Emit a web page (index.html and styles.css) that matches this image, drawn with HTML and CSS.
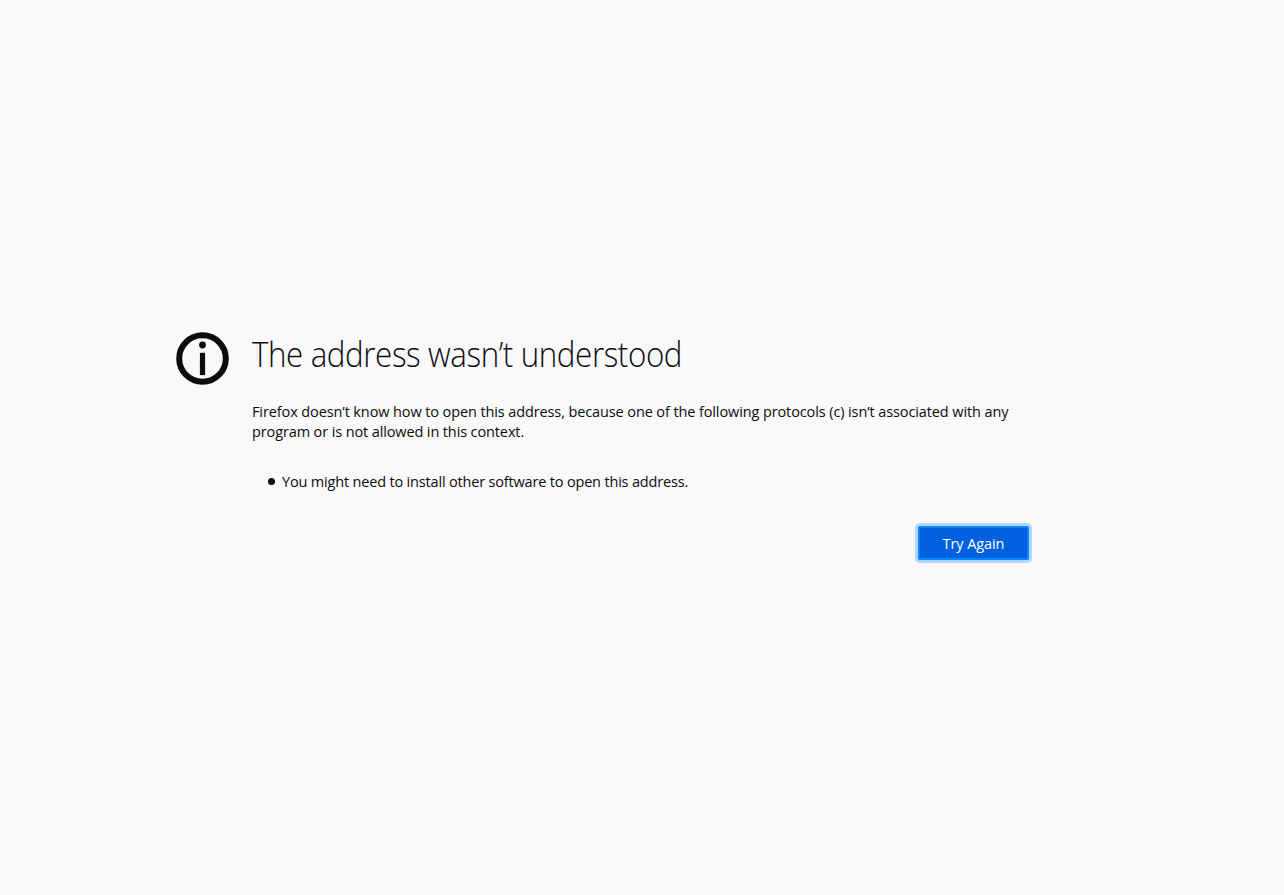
FILE: index.html
```html
<!DOCTYPE html>
<html lang="en">
<head>
<meta charset="utf-8">
<title>Problem loading page</title>
<link rel="stylesheet" href="styles.css">
</head>
<body>
<main class="container">
  <svg class="icon" viewBox="0 0 54 54" aria-hidden="true">
    <circle cx="27.5" cy="27.5" r="23.3" fill="none" stroke="#0c0c0d" stroke-width="6"/>
    <circle cx="27.5" cy="14" r="3.4" fill="#0c0c0d"/>
    <rect x="24.9" y="21.8" width="5.2" height="22.3" fill="#0c0c0d"/>
  </svg>
  <div class="content">
    <h1 class="title"><span class="title-text">The address wasn’t understood</span></h1>
    <p class="description"><span class="line-one">Firefox doesn’t know how to open this address, because one of the following protocols (c) isn’t associated with any</span><br><span class="line-two">program or is not allowed in this context.</span></p>
    <ul class="hints">
      <li class="hint"><span class="hint-text">You might need to install other software to open this address.</span></li>
    </ul>
    <div class="actions"><button class="retry" type="button">Try Again</button></div>
  </div>
</main>
</body>
</html>
```
FILE: styles.css
```css
body {
  margin: 0;
  min-height: 895px;
  background: #f9f9fa;
  color: #0c0c0d;
  font: 14.5px/20px "Open Sans", "Noto Sans", sans-serif;
}
.container {
  display: flex;
  gap: 23px;
  width: 857px;
  padding: 331px 0 0 175px;
}
.icon {
  flex: none;
  width: 54px;
  height: 54px;
}
.content {
  width: 780px;
}
.title {
  margin: 0;
  font-size: 34px;
  font-weight: 300;
  line-height: 46px;
  white-space: nowrap;
}
.title-text {
  display: inline-block;
  letter-spacing: -0.45px;
  transform: scaleX(0.922);
  transform-origin: 0 50%;
}
.description {
  margin: 25px 0 0;
  white-space: nowrap;
}
.line-one { letter-spacing: -0.11px; }
.line-two { letter-spacing: -0.12px; }
.hints {
  margin: 30px 0 0;
  padding: 0 0 0 16px;
  list-style: none;
}
.hint {
  display: flex;
  align-items: center;
  gap: 7px;
  white-space: nowrap;
}
.hint-text { letter-spacing: -0.175px; }
.hint::before {
  content: "";
  width: 7px;
  height: 7px;
  margin-bottom: 1px;
  border-radius: 50%;
  background: #0c0c0d;
}
.actions {
  display: flex;
  justify-content: flex-end;
  margin-top: 34px;
  padding-right: 3px;
}
.retry {
  box-sizing: border-box;
  width: 111px;
  height: 34px;
  padding: 1px 0 0;
  border: 2px solid #0a84ff;
  border-radius: 2px;
  background: #0060df;
  box-shadow: 0 0 0 3px rgba(10, 132, 255, 0.3);
  color: #fff;
  font: inherit;
  letter-spacing: -0.08px;
}
```
